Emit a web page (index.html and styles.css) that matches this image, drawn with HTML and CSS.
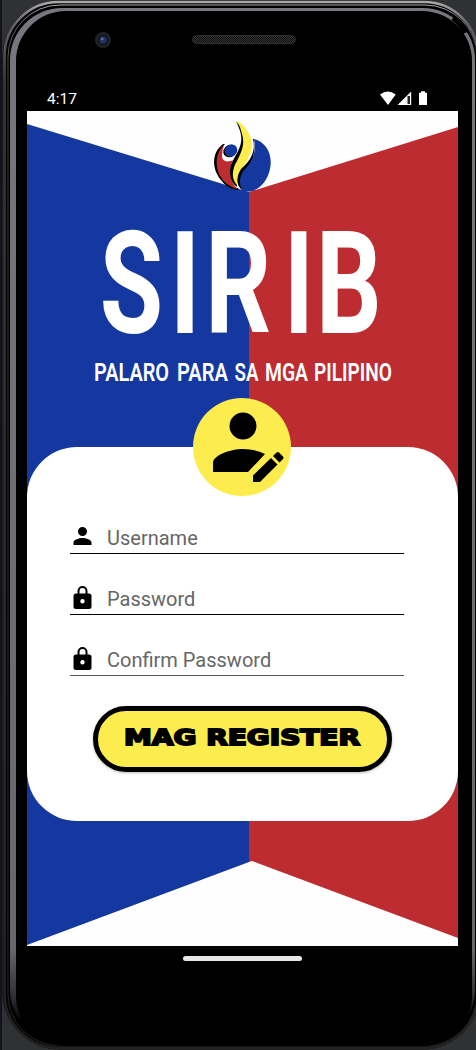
FILE: index.html
```html
<!DOCTYPE html>
<html lang="fil">
<head>
<meta charset="utf-8">
<title>SIRIB</title>
<link rel="stylesheet" href="styles.css">
</head>
<body>
<div class="phone">
  <svg class="shell" viewBox="0 0 476 1050" aria-hidden="true">
    <defs>
      <linearGradient id="edge" x1="0" y1="0" x2="0" y2="1">
        <stop offset="0" stop-color="#aaa7aa"/><stop offset=".02" stop-color="#66666a"/>
        <stop offset=".08" stop-color="#383838"/><stop offset="1" stop-color="#232222"/>
      </linearGradient>
      <linearGradient id="rim" x1="0" y1="0" x2="0" y2="1">
        <stop offset="0" stop-color="#77777d"/><stop offset=".91" stop-color="#66676b"/>
        <stop offset=".96" stop-color="#292a2e"/><stop offset=".98" stop-color="#000"/>
      </linearGradient>
    </defs>
    <rect width="476" height="1050" fill="#303133"/>
    <rect width="2" height="1050" fill="#13141b"/>
    <rect x="2.500" y=".5" width="477" height="1049" rx="57" fill="#050505"/>
    <rect x="4.500" y="2" width="473.500" height="1046" rx="54" fill="none" stroke="url(#edge)" stroke-width="2.600"/>
    <rect x="8" y="5" width="469" height="1041" rx="52" fill="#000" stroke="url(#edge)" stroke-width="1"/>
    <rect x="10" y="8" width="465" height="1034" rx="52" fill="url(#rim)"/>
    <rect x="16" y="11" width="456" height="1035" rx="50" fill="#000"/>
    <path d="M453 18Q461 24 465 33" fill="none" stroke="#000" stroke-width="5"/>
  </svg>
  <div class="top-bezel">
    <svg class="camera" viewBox="0 0 16 16"><circle cx="8" cy="8" r="8" fill="#202123"/><circle cx="8" cy="8" r="5.200" fill="#12131a"/><circle cx="8" cy="8" r="3.800" fill="#20305f"/><circle cx="7.300" cy="7" r="1.200" fill="#6679ad"/></svg>
    <div class="speaker"></div>
  </div>
  <div class="status">
    <span>4:17</span>
    <svg class="status-icons" viewBox="0 0 49 15" fill="#fff"><path d="M0 3.600Q7.800-2.400 15.700 3.600L8 14Z"/><path d="M31.200.5V14H17.500Z"/><path d="M27.500 5h2.500v8h-2.500z" fill="#222"/><path d="M41 .2h4v1.500h2V14h-8V1.700h2z"/></svg>
  </div>
  <main class="screen">
    <svg class="backdrop" viewBox="0 0 431 835" aria-hidden="true"><path fill="#1537a0" d="M0 13L222 81V751L0 834Z"/><path fill="#bc2c30" d="M222 81L431 16V827L225 750L222 751Z"/></svg>
    <header class="brand">
      <svg class="logo" viewBox="200 110 90 90" aria-hidden="true">
        <path fill="#000" d="M223 144C213 151 212 164 217 174C222 184 230 189 237 190L239 189C225 183 217 169 219 157Q220 149 225 144Z"/>
        <path fill="#bc2c30" d="M224 145C215 153 215 166 220 176Q226 186 237 189C230 181 228 170 233 160C227 163 222 161 222 156Q222 150 224 145Z"/>
        <ellipse cx="230" cy="151" rx="7" ry="6" transform="rotate(-35 230 151)" fill="#000"/>
        <ellipse cx="231" cy="150.500" rx="6.500" ry="5.800" transform="rotate(-35 231 150.500)" fill="#1537a0"/>
        <path fill="#000" d="M236 121C240 130 244 138 239 149C235 158 229 164 230 174Q231 183 237 187C236 174 247 163 249 151C250 138 242 129 236 121Z"/>
        <path fill="#fcec4d" d="M237 120C249 129 254 140 251 152C247 164 237 172 237 185C231 179 232 169 237 161C242 151 245 144 242 134Q240 126 237 120Z"/>
        <path fill="#000" d="M253 139C256 151 251 160 242 168C235 176 236 190 246 191Q238 180 248 170Q256 158 254 139Z"/>
        <path fill="#1537a0" d="M254 139C267 142 273 156 270 169C267 184 255 194 244 191C238 187 239 175 245 169C254 160 256 150 254 139Z"/>
      </svg>
      <svg class="wordmark" viewBox="27 220 431 174" role="img">
        <g class="title-glyphs" transform="translate(0 333) scale(.72 1)"><text x="138.500 236 285 394 439" y="0">SIRIB</text></g>
        <g class="tagline">
          <text x="94" y="380.500" textLength="75" lengthAdjust="spacingAndGlyphs">PALARO</text>
          <text x="177" y="380.500" textLength="51" lengthAdjust="spacingAndGlyphs">PARA</text>
          <text x="234.500" y="380.500" textLength="24" lengthAdjust="spacingAndGlyphs">SA</text>
          <text x="265" y="380.500" textLength="43" lengthAdjust="spacingAndGlyphs">MGA</text>
          <text x="314" y="380.500" textLength="78" lengthAdjust="spacingAndGlyphs">PILIPINO</text>
        </g>
      </svg>
    </header>
    <form class="card">
      <svg class="avatar" viewBox="0 0 98 98"><circle cx="49" cy="49" r="49" fill="#fcec4d"/><circle cx="50" cy="28" r="13.500"/><path d="M20 74V65C20 57 38 51 50 51Q62 51 72 56L55 74ZM60 84V77.500L78 60L84.500 66.500L67 84ZM80 58L83.500 54.500Q85 53.500 86 54.500L90 58.500Q91 60 90 61L86.500 64.500Z"/></svg>
      <label class="field"><svg viewBox="0 0 24 24"><path d="M12 12a4.500 4.500 0 1 0 0-9 4.500 4.500 0 0 0 0 9Zm0 2c-3 0-9 1.500-9 4.500V21h18v-2.500c0-3-6-4.500-9-4.500Z"/></svg><input type="text" placeholder="Username"></label>
      <label class="field"><svg viewBox="0 0 24 24"><path fill-rule="evenodd" d="M18.500 8.500H17V6A5 5 0 0 0 7 6v2.500H5.500Q3 8.500 3 11v10.500Q3 24 5.500 24h13q2.500 0 2.500-2.500V11q0-2.500-2.500-2.500ZM9 8.500V6a3 3 0 0 1 6 0v2.500ZM12 18.500a2.200 2.200 0 1 1 0-4.400 2.200 2.200 0 0 1 0 4.400Z"/></svg><input type="password" placeholder="Password"></label>
      <label class="field last"><svg viewBox="0 0 24 24"><path fill-rule="evenodd" d="M18.500 8.500H17V6A5 5 0 0 0 7 6v2.500H5.500Q3 8.500 3 11v10.500Q3 24 5.500 24h13q2.500 0 2.500-2.500V11q0-2.500-2.500-2.500ZM9 8.500V6a3 3 0 0 1 6 0v2.500ZM12 18.500a2.200 2.200 0 1 1 0-4.400 2.200 2.200 0 0 1 0 4.400Z"/></svg><input type="password" placeholder="Confirm Password"></label>
      <button class="register" type="button"><svg viewBox="0 0 238 20"><text x="0" y="17.500" textLength="236" lengthAdjust="spacingAndGlyphs">MAG REGISTER</text></svg></button>
    </form>
  </main>
  <div class="home-bar"></div>
</div>
</body>
</html>
```
FILE: styles.css
```css
* { box-sizing: border-box; }
body { margin: 0; background: #303133; font-family: Roboto, sans-serif; }
svg { display: block; }
.phone { position: relative; width: 476px; height: 1050px; overflow: hidden; padding: 0 18px 0 27px; display: flex; flex-direction: column; isolation: isolate; }
.shell { position: absolute; inset: 0; width: 476px; height: 1050px; z-index: -1; }
.top-bezel { height: 84px; flex: none; display: flex; align-items: flex-start; padding: 32px 0 0 68px; gap: 81px; }
.camera { width: 16px; height: 16px; }
.speaker { width: 104px; height: 9px; margin-top: 3px; border: 1px solid #2e2e2e; border-radius: 5px; background: repeating-conic-gradient(#111 0 25%, #343434 0 50%) 0 0 / 2px 2px; }
.status { height: 27px; flex: none; display: flex; justify-content: space-between; align-items: flex-start; padding: 6px 29px 0 20px; color: #fff; font-size: 15.5px; line-height: 18px; }
.status-icons { width: 49px; height: 15px; margin-top: 1px; }
.screen { position: relative; flex: none; height: 835px; background: #fefefe; isolation: isolate; }
.backdrop { position: absolute; inset: 0; width: 431px; height: 835px; z-index: -1; }
.brand { height: 336px; }
.logo { width: 90px; height: 90px; margin-left: 173px; transform: translateY(-1px); }
.wordmark { width: 431px; height: 174px; margin-top: 19px; fill: #fff; overflow: visible; }
.title-glyphs { font: bold 143px Roboto, sans-serif; }
.tagline { font: 600 26.5px Roboto, sans-serif; }
.card { height: 374px; border-radius: 50px; background: #fff; padding: 0 54px 0 43px; display: flex; flex-direction: column; }
.avatar { width: 98px; height: 98px; margin: -49px 0 0 123px; flex: none; }
.field { flex: none; height: 36px; margin: 22px 0 3px; display: flex; align-items: flex-end; border-bottom: 1px solid #000; }
.field svg { width: 25px; height: 24px; margin-bottom: 5px; flex: none; }
.field input { width: 290px; height: 30px; border: 0; padding: 0; margin-left: 12px; outline: 0; background: transparent; font: 20px Roboto, sans-serif; }
.field input::placeholder { color: #666; opacity: 1; }
.last { border-bottom-color: #555; }
.register { flex: none; width: 299px; height: 66px; margin: 27px 0 0 23px; border: 5px solid #000; border-radius: 33px; background: #fcec4d; display: grid; place-items: center; padding: 0 0 4px; box-shadow: 0 1px 3px #0004; }
.register svg { width: 238px; height: 20px; overflow: visible; font: bold 21px "DejaVu Sans", sans-serif; stroke: #000; stroke-width: 1.8px; }
.home-bar { width: 119px; height: 5px; flex: none; margin: 10px 0 0 156px; border-radius: 3px; background: #e7e7e7; }
```
